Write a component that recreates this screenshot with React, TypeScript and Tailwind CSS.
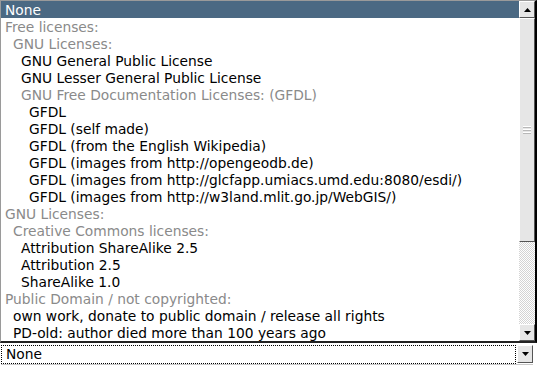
import React from 'react';

type Row = { label: string; level: number; group?: boolean; selected?: boolean };

const rows: Row[] = [
    { label: 'None', level: 0, selected: true },
    { label: 'Free licenses:', level: 0, group: true },
    { label: 'GNU Licenses:', level: 1, group: true },
    { label: 'GNU General Public License', level: 2 },
    { label: 'GNU Lesser General Public License', level: 2 },
    { label: 'GNU Free Documentation Licenses: (GFDL)', level: 2, group: true },
    { label: 'GFDL', level: 3 },
    { label: 'GFDL (self made)', level: 3 },
    { label: 'GFDL (from the English Wikipedia)', level: 3 },
    { label: 'GFDL (images from http://opengeodb.de)', level: 3 },
    { label: 'GFDL (images from http://glcfapp.umiacs.umd.edu:8080/esdi/)', level: 3 },
    { label: 'GFDL (images from http://w3land.mlit.go.jp/WebGIS/)', level: 3 },
    { label: 'GNU Licenses:', level: 0, group: true },
    { label: 'Creative Commons licenses:', level: 1, group: true },
    { label: 'Attribution ShareAlike 2.5', level: 2 },
    { label: 'Attribution 2.5', level: 2 },
    { label: 'ShareAlike 1.0', level: 2 },
    { label: 'Public Domain / not copyrighted:', level: 0, group: true },
    { label: 'own work, donate to public domain / release all rights', level: 1 },
    { label: 'PD-old: author died more than 100 years ago', level: 1 },
];

// indentation per nesting level
const indent = ['pl-[4px]', 'pl-[12px]', 'pl-[20px]', 'pl-[28px]'];

const Arrow = ({ up }: { up?: boolean }) => (
    <svg width="7" height="4" viewBox="0 0 7 4">
        {up ? <path d="M3.5 0 L7 4 L0 4 Z" fill="#000" /> : <path d="M0 0 L7 0 L3.5 4 Z" fill="#000" />}
    </svg>
);

const ScrollButton = ({ up }: { up?: boolean }) => (
    <div className="h-[17px] w-full flex items-center justify-center bg-[#e6e6e6] border border-t-white border-l-white border-r-[#555] border-b-[#555]">
        <Arrow up={up} />
    </div>
);

export default function App() {
    return (
        <div className="w-[537px] h-[366px] bg-white overflow-hidden text-[13.8px] leading-[17px]" style={{ fontFamily: '"DejaVu Sans", sans-serif' }}>
            {/* expanded dropdown list */}
            <div className="h-[343px] flex border-t border-l border-[#9a9a9a] border-r-2 border-r-black border-b-2 border-b-[#222]">
                <div className="flex-1 overflow-hidden">
                    {rows.map((r, i) => (
                        <div
                            key={i}
                            className={`h-[17px] pt-px whitespace-nowrap ${indent[r.level]} ${
                                r.selected ? 'bg-[#4b6983] text-white' : r.group ? 'text-[#8a8a8a]' : 'text-black'
                            }`}
                        >
                            {r.label}
                        </div>
                    ))}
                </div>
                <div className="w-[16px] flex flex-col">
                    <ScrollButton up />
                    <div className="h-[224px] bg-[#e6e6e6] border border-t-white border-l-white border-r-[#555] border-b-[#555] flex items-center justify-center">
                        <svg width="8" height="9" viewBox="0 0 8 9">
                            <rect x="0" y="0" width="8" height="1" fill="#fff" />
                            <rect x="0" y="1" width="8" height="1" fill="#b8b8b8" />
                            <rect x="0" y="3" width="8" height="1" fill="#fff" />
                            <rect x="0" y="4" width="8" height="1" fill="#b8b8b8" />
                            <rect x="0" y="6" width="8" height="1" fill="#fff" />
                            <rect x="0" y="7" width="8" height="1" fill="#b8b8b8" />
                        </svg>
                    </div>
                    <div className="flex-1 bg-[repeating-conic-gradient(#d4d4d4_0_25%,#fff_0_50%)] bg-[length:2px_2px]" />
                    <ScrollButton />
                </div>
            </div>
            {/* the select box itself */}
            <div className="mt-[1px] h-[21px] mx-[1px] w-[532px] flex items-center bg-white border-b border-[#c8c8c8]">
                <div className="flex-1 h-[19px] border border-dotted border-black pl-[4px] leading-[17px]">None</div>
                <div className="ml-[1px] w-[16px] h-[18px] flex items-center justify-center bg-[#e6e6e6] border border-t-white border-l-white border-r-[#555] border-b-[#555]">
                    <Arrow />
                </div>
            </div>
        </div>
    );
}
